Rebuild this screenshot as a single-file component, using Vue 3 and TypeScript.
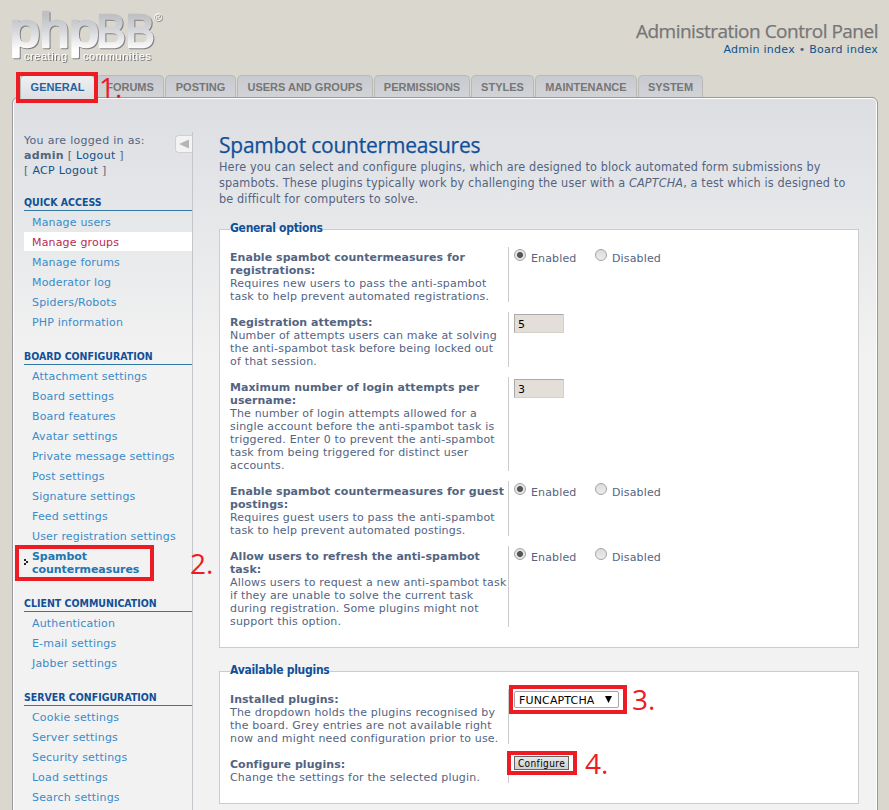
<script setup lang="ts">
interface Tab { label: string; width: number; active?: boolean }
interface MenuItem { lines: string[]; state?: 'hover' | 'current' }
interface MenuBlock { title: string; items: MenuItem[] }
interface Option { title: string[]; text: string[]; control: 'radio' | 'input' | 'select' | 'button'; value?: string }
interface Group { legend: string; options: Option[] }

const tabs: Tab[] = [
  { label: 'GENERAL', width: 75, active: true },
  { label: 'FORUMS', width: 68 },
  { label: 'POSTING', width: 71 },
  { label: 'USERS AND GROUPS', width: 136 },
  { label: 'PERMISSIONS', width: 96 },
  { label: 'STYLES', width: 63 },
  { label: 'MAINTENANCE', width: 102 },
  { label: 'SYSTEM', width: 65 },
]

const item = (...lines: string[]): MenuItem => ({ lines })

const menu: MenuBlock[] = [
  {
    title: 'QUICK ACCESS',
    items: [
      item('Manage users'),
      { lines: ['Manage groups'], state: 'hover' },
      item('Manage forums'),
      item('Moderator log'),
      item('Spiders/Robots'),
      item('PHP information'),
    ],
  },
  {
    title: 'BOARD CONFIGURATION',
    items: [
      item('Attachment settings'),
      item('Board settings'),
      item('Board features'),
      item('Avatar settings'),
      item('Private message settings'),
      item('Post settings'),
      item('Signature settings'),
      item('Feed settings'),
      item('User registration settings'),
      { lines: ['Spambot', 'countermeasures'], state: 'current' },
    ],
  },
  {
    title: 'CLIENT COMMUNICATION',
    items: [item('Authentication'), item('E-mail settings'), item('Jabber settings')],
  },
  {
    title: 'SERVER CONFIGURATION',
    items: [
      item('Cookie settings'),
      item('Server settings'),
      item('Security settings'),
      item('Load settings'),
      item('Search settings'),
    ],
  },
]

const groups: Group[] = [
  {
    legend: 'General options',
    options: [
      {
        title: ['Enable spambot countermeasures for', 'registrations:'],
        text: ['Requires new users to pass the anti-spambot', 'task to help prevent automated registrations.'],
        control: 'radio',
      },
      {
        title: ['Registration attempts:'],
        text: ['Number of attempts users can make at solving', 'the anti-spambot task before being locked out', 'of that session.'],
        control: 'input',
        value: '5',
      },
      {
        title: ['Maximum number of login attempts per', 'username:'],
        text: [
          'The number of login attempts allowed for a',
          'single account before the anti-spambot task is',
          'triggered. Enter 0 to prevent the anti-spambot',
          'task from being triggered for distinct user',
          'accounts.',
        ],
        control: 'input',
        value: '3',
      },
      {
        title: ['Enable spambot countermeasures for guest', 'postings:'],
        text: ['Requires guest users to pass the anti-spambot', 'task to help prevent automated postings.'],
        control: 'radio',
      },
      {
        title: ['Allow users to refresh the anti-spambot', 'task:'],
        text: [
          'Allows users to request a new anti-spambot task',
          'if they are unable to solve the current task',
          'during registration. Some plugins might not',
          'support this option.',
        ],
        control: 'radio',
      },
    ],
  },
  {
    legend: 'Available plugins',
    options: [
      {
        title: ['Installed plugins:'],
        text: ['The dropdown holds the plugins recognised by', 'the board. Grey entries are not available right', 'now and might need configuration prior to use.'],
        control: 'select',
        value: 'FUNCAPTCHA',
      },
      {
        title: ['Configure plugins:'],
        text: ['Change the settings for the selected plugin.'],
        control: 'button',
        value: 'Configure',
      },
    ],
  },
]
</script>

<template>
  <div class="page">
    <header class="header">
      <svg class="logo" width="156" height="58" viewBox="0 0 156 58" role="img" aria-label="phpBB creating communities">
        <defs>
          <linearGradient id="metal" gradientUnits="userSpaceOnUse" x1="0" y1="4" x2="0" y2="48">
            <stop offset="0.05" stop-color="#bfc0c3" />
            <stop offset="0.4" stop-color="#d6d7da" />
            <stop offset="0.85" stop-color="#ffffff" />
          </linearGradient>
        </defs>
        <g class="word">
          <text x="-1" y="38" textLength="89" lengthAdjust="spacingAndGlyphs">php</text>
          <text class="caps" x="85.5" y="38" textLength="58" lengthAdjust="spacingAndGlyphs">BB</text>
        </g>
        <g class="tagline">
          <text x="13" y="51" textLength="43">creating</text>
          <text x="72" y="51" textLength="68">communities</text>
        </g>
        <text class="mark" x="143" y="12">®</text>
      </svg>
      <div class="heading">
        <h1>Administration Control Panel</h1>
        <p><a>Admin index</a> • <a>Board index</a></p>
      </div>
    </header>

    <nav class="tabs">
      <a v-for="tab in tabs" :key="tab.label" class="tab" :class="{ active: tab.active }" :style="{ width: tab.width + 'px' }">{{ tab.label }}</a>
    </nav>

    <div class="panel">
      <aside class="sidebar">
        <span class="toggle">
          <svg width="10" height="10" viewBox="0 0 10 10"><path d="M10 0.5V9.5L0 5Z" fill="#b5b5b8" /></svg>
        </span>
        <p class="login">
          You are logged in as:<br />
          <b>admin</b> [ <a>Logout</a> ]<br />
          [ <a>ACP Logout</a> ]
        </p>
        <section v-for="block in menu" :key="block.title" class="block">
          <h2>{{ block.title }}</h2>
          <ul>
            <li v-for="entry in block.items" :key="entry.lines[0]" :class="entry.state">
              <svg v-if="entry.state === 'current'" class="arrow" width="4" height="6" viewBox="0 0 4 6"><path d="M0 0h2v2h-2zM2 2h2v2h-2zM0 4h2v2h-2z" fill="#222" /></svg>
              <span v-for="line in entry.lines" :key="line">{{ line }}</span>
            </li>
          </ul>
        </section>
      </aside>

      <main class="content">
        <h1>Spambot countermeasures</h1>
        <p class="intro">
          <span>Here you can select and configure plugins, which are designed to block automated form submissions by</span>
          <span>spambots. These plugins typically work by challenging the user with a <em>CAPTCHA</em>, a test which is designed to</span>
          <span>be difficult for computers to solve.</span>
        </p>
        <fieldset v-for="group in groups" :key="group.legend">
          <legend>{{ group.legend }}</legend>
          <dl v-for="(option, index) in group.options" :key="index">
            <dt>
              <b v-for="line in option.title" :key="line">{{ line }}</b>
              <span v-for="line in option.text" :key="line">{{ line }}</span>
            </dt>
            <dd :class="option.control">
              <template v-if="option.control === 'radio'">
                <label><i class="dot on"></i>Enabled</label>
                <label><i class="dot"></i>Disabled</label>
              </template>
              <span v-else-if="option.control === 'input'" class="field">{{ option.value }}</span>
              <span v-else-if="option.control === 'select'" class="dropdown">
                {{ option.value }}
                <svg width="7" height="7" viewBox="0 0 7 7"><path d="M0 0H7L3.5 7Z" fill="#000" /></svg>
              </span>
              <button v-else type="button">{{ option.value }}</button>
            </dd>
          </dl>
        </fieldset>
      </main>
    </div>

    <div class="outline outline-1"></div>
    <div class="outline outline-2"></div>
    <div class="outline outline-3"></div>
    <div class="outline outline-4"></div>
    <span class="step step-1">1.</span>
    <span class="step step-2">2.</span>
    <span class="step step-3">3.</span>
    <span class="step step-4">4.</span>
  </div>
</template>

<style>
body {
  margin: 0;
  overflow: hidden;
  background: #dad7cf;
}
</style>

<style scoped>
.page {
  position: relative;
  box-sizing: border-box;
  width: 889px;
  height: 810px;
  padding: 0 11px 0 12px;
  overflow: hidden;
  background: #dad7cf;
  color: #536482;
  font: 11px/13px "DejaVu Sans", sans-serif;
}
h1, h2, p, ul, dl, dd, fieldset { margin: 0; padding: 0; }
ul { list-style: none; }

.header { display: flex; justify-content: space-between; height: 75px; }
.logo { margin: 9px 0 0 -1px; overflow: visible; }
.word { filter: drop-shadow(1px 1px 0.4px #808083); }
.word text {
  fill: url(#metal);
  stroke: url(#metal);
  stroke-width: 2.6px;
  stroke-linejoin: round;
  font: 49px "Liberation Sans", sans-serif;
}
.word .caps { font-size: 47px; }
.tagline text, .mark {
  fill: #fff;
  filter: drop-shadow(1px 1px 0.2px #777);
  font: 11px "Liberation Sans", sans-serif;
}
.heading { padding-top: 19px; text-align: right; }
.heading h1 {
  color: #767676;
  font: 19px/24px "Open Sans", sans-serif;
  letter-spacing: -0.5px;
  white-space: nowrap;
  -webkit-text-stroke: 0.25px #767676;
}
.heading p { padding-top: 0; line-height: 14px; letter-spacing: 0.26px; }
.heading a, .login a { color: #105289; }

.tabs { display: flex; gap: 1px; height: 22px; padding-left: 8px; }
.tab {
  box-sizing: border-box;
  border: 1px solid #b9b9b6;
  border-bottom: 0;
  border-radius: 5px 5px 0 0;
  background: linear-gradient(#c7cad0, #d2d3d7);
  color: #767676;
  font: bold 11px/23px "Liberation Sans", sans-serif;
  text-align: center;
}
.tab.active { position: relative; height: 24px; background: linear-gradient(#f0f0f2, #dcdee2); color: #23649f; }

.panel {
  display: flex;
  box-sizing: border-box;
  height: 760px;
  border: 1px solid #999;
  border-radius: 6px;
  box-shadow: inset 0 0 0 1px #fff;
  background: linear-gradient(#dcdee2, #f2f2f2 260px);
}
.sidebar {
  position: relative;
  box-sizing: border-box;
  width: 169px;
  margin: 34px 0 0 11px;
  padding-top: 1px;
  border-right: 1px solid #c5c6cc;
}
.toggle {
  position: absolute;
  top: 3px;
  right: 0;
  display: flex;
  align-items: center;
  justify-content: center;
  box-sizing: border-box;
  width: 17px;
  height: 18px;
  border: 1px solid #d0d0d2;
  border-right: 0;
  border-radius: 4px 0 0 4px;
  background: #f3f3f3;
}
.login { height: 62px; line-height: 15px; letter-spacing: 0.3px; }
.block h2 {
  height: 15px;
  margin-bottom: 1px;
  border-bottom: 1px solid #327aa5;
  color: #115098;
  font: bold 10.5px/14px "DejaVu Sans Condensed", "DejaVu Sans", sans-serif;
  letter-spacing: 0;
  white-space: nowrap;
}
.block + .block { margin-top: 18px; }
.block li {
  position: relative;
  margin-bottom: 1px;
  padding: 4px 0 2px 8px;
  color: #3a8bc9;
  letter-spacing: 0.17px;
  white-space: nowrap;
}
.block li span { display: block; }
.block li.hover { background: #fff; color: #bc2a4d; }
.block li.current { color: #2276b1; font-weight: bold; letter-spacing: -0.05px; }
.arrow { position: absolute; top: 13px; left: 0; }

.content { width: 640px; padding: 33px 0 0 26px; }
.content h1 {
  height: 28px;
  color: #115098;
  font: 21px/28px "Open Sans", sans-serif;
  letter-spacing: -0.22px;
  -webkit-text-stroke: 0.25px #115098;
}
.intro { height: 63px; font: 12.5px/16px "DejaVu Sans Condensed", sans-serif; letter-spacing: 0.15px; white-space: nowrap; }
.intro span { display: block; }
fieldset {
  box-sizing: border-box;
  width: 640px;
  margin-bottom: 16px;
  padding: 10px 0 10px;
  border: 1px solid #ccc;
  background: #fff;
}
legend {
  position: relative;
  top: -1px;
  height: 15px;
  margin-left: 10px;
  padding: 0;
  color: #115098;
  font: bold 12px/15px "DejaVu Sans Condensed", sans-serif;
  letter-spacing: -0.27px;
}
dl { display: flex; margin-bottom: 10px; }
dt {
  flex: 0 0 288px;
  box-sizing: border-box;
  margin-bottom: -1px;
  padding: 4px 0 0 10px;
  letter-spacing: 0.18px;
  white-space: nowrap;
}
dt b, dt span { display: block; }
dt b { letter-spacing: 0.05px; }
dd { padding: 2px 0 0 5px; border-left: 1px solid #ccc; }
.radio { display: flex; letter-spacing: 0.15px; }
.radio label { display: flex; width: 81px; height: 19px; line-height: 19px; gap: 5px; }
.dot {
  box-sizing: border-box;
  width: 12px;
  height: 12px;
  border: 1px solid #a4a4a4;
  border-radius: 50%;
  background: linear-gradient(#dcdcdc, #ececec);
}
.dot.on { background: radial-gradient(circle, #555 2.6px, #e4e4e4 3.4px); }
.field {
  display: block;
  box-sizing: border-box;
  width: 50px;
  height: 19px;
  padding-left: 3px;
  border: 1px solid #d5d0c4;
  border-top-color: #aaa;
  border-left-color: #aaa;
  background: #e3dfd8;
  color: #000;
  line-height: 19px;
}
.dropdown {
  display: flex;
  align-items: center;
  justify-content: space-between;
  box-sizing: border-box;
  width: 105px;
  height: 17px;
  padding: 1px 6px 0 4px;
  border: 1px solid #a6a6a6;
  border-radius: 2px;
  color: #000;
  letter-spacing: 0.15px;
}
.dropdown svg { margin-top: -2px; }
button {
  display: block;
  box-sizing: border-box;
  width: 55px;
  height: 14px;
  padding: 1px 0 0;
  border: 1px solid #666;
  background: linear-gradient(#e8e8e8, #d0d0d0);
  color: #000;
  font: 10px/12px "DejaVu Sans Condensed", sans-serif;
  letter-spacing: 0.4px;
}

.outline { position: absolute; box-sizing: border-box; border: 4px solid #ed1c24; }
.outline-1 { left: 16px; top: 72px; width: 82px; height: 31px; }
.outline-2 { left: 15px; top: 545px; width: 139px; height: 36px; }
.outline-3 { left: 509px; top: 685px; width: 118px; height: 29px; }
.outline-4 { left: 507px; top: 751px; width: 70px; height: 24px; }
.step { position: absolute; color: #ed1c24; font: 28px/28px "Open Sans", sans-serif; }
.step-1 { left: 99px; top: 73px; }
.step-2 { left: 190px; top: 549px; }
.step-3 { left: 632px; top: 685px; }
.step-4 { left: 585px; top: 749px; }
</style>
